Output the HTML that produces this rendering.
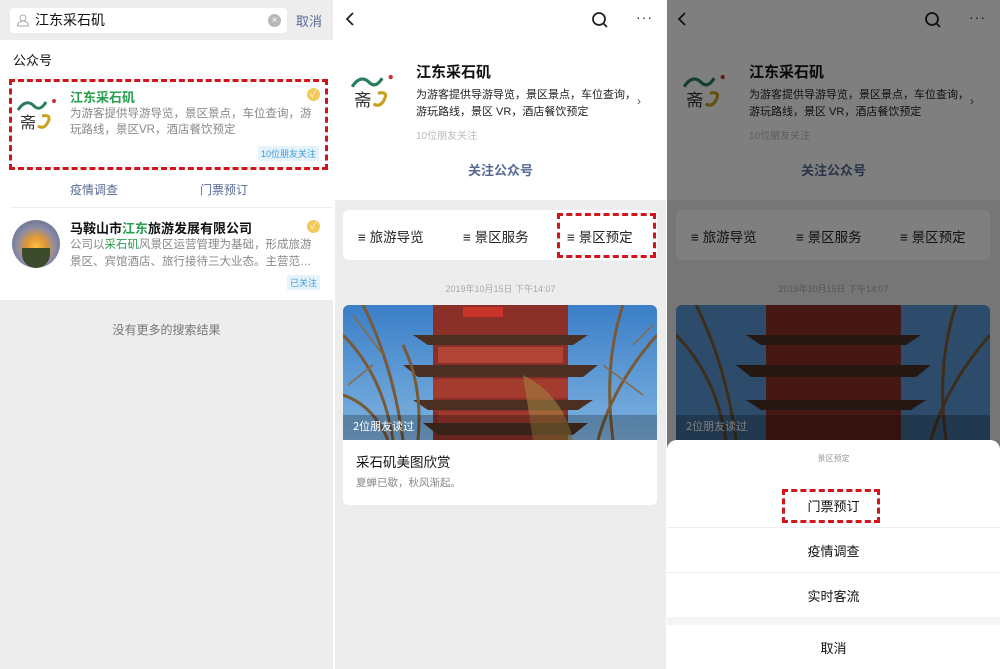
<!DOCTYPE html>
<html><head><meta charset="utf-8">
<style>
*{margin:0;padding:0;box-sizing:border-box}
body{width:1000px;height:669px;overflow:hidden;background:#fff;font-family:"Liberation Sans","Noto Sans CJK SC",sans-serif;position:relative}
.a{position:absolute;white-space:nowrap}
.p{position:absolute;top:0;height:669px;overflow:hidden}
.dash{position:absolute;border:3px dashed #d0161b}
</style></head><body>

<!-- Panel 1 -->
<div class="p" style="left:0;width:333px;background:#ededed">
  <div class="a" style="left:10px;top:8px;width:277px;height:25px;background:#fff;border-radius:4px"></div>
  <svg class="a" style="left:16px;top:13px" width="14" height="14" viewBox="0 0 14 14"><circle cx="7" cy="5" r="3" fill="none" stroke="#aaa"/><path d="M1.5 13c0-3 2.5-5 5.5-5s5.5 2 5.5 5z" fill="none" stroke="#aaa"/></svg>
  <div class="a" style="left:35px;top:10px;font-size:14px;color:#111">江东采石矶</div>
  <div class="a" style="left:268px;top:14px;width:13px;height:13px;border-radius:50%;background:#b8b8b8;color:#fff;font-size:10px;line-height:13px;text-align:center">×</div>
  <div class="a" style="left:296px;top:11px;font-size:13px;color:#576b95">取消</div>
  <div class="a" style="left:0;top:40px;width:333px;height:260px;background:#fff"></div>
  <div class="a" style="left:13px;top:50px;font-size:13px;color:#111">公众号</div>
  <svg class="a" style="left:16px;top:96px" width="42" height="36" viewBox="0 0 42 36"><path d="M2 14 Q10 2 18 10 Q24 16 30 6" fill="none" stroke="#2a7d5a" stroke-width="3"/><circle cx="38" cy="5" r="2" fill="#c33"/><text x="4" y="32" font-size="16" fill="#333" font-family="Noto Sans CJK SC">斋</text><path d="M26 20 Q36 18 32 26 Q28 34 22 30" fill="none" stroke="#c9a020" stroke-width="3"/></svg>
  <div class="a" style="left:70px;top:87px;font-size:13px;color:#2aa04e;font-weight:bold">江东采石矶</div>
  <div class="a" style="left:307px;top:88px;width:13px;height:13px;border-radius:50%;background:#f3c95a;color:#fff;font-size:9px;line-height:13px;text-align:center">✓</div>
  <div class="a" style="left:70px;top:106px;font-size:11.5px;line-height:16px;color:#888;white-space:normal;width:252px">为游客提供导游导览，景区景点，车位查询，游玩路线，景区VR，酒店餐饮预定</div>
  <div class="a" style="left:258px;top:146px;font-size:9px;color:#3a9bd8;background:#e6f3fb;padding:1px 3px">10位朋友关注</div>
  <div class="dash" style="left:9px;top:79px;width:319px;height:91px"></div>
  <div class="a" style="left:70px;top:181px;font-size:12px;color:#576b95">疫情调查</div>
  <div class="a" style="left:200px;top:181px;font-size:12px;color:#576b95">门票预订</div>
  <div class="a" style="left:10px;top:207px;width:323px;height:1px;background:#eee"></div>
  <div class="a" style="left:12px;top:220px;width:48px;height:48px;border-radius:50%;background:radial-gradient(circle at 50% 55%,#f7c04a 0,#e59a30 25%,#8a8aa8 55%,#4a6070 100%)"></div>
  <div class="a" style="left:22px;top:248px;width:28px;height:20px;border-radius:0 0 14px 14px;background:#3a4a2a"></div>
  <div class="a" style="left:70px;top:218px;font-size:13px;color:#111;font-weight:bold">马鞍山市<span style="color:#2aa04e">江东</span>旅游发展有限公司</div>
  <div class="a" style="left:307px;top:220px;width:13px;height:13px;border-radius:50%;background:#f3c95a;color:#fff;font-size:9px;line-height:13px;text-align:center">✓</div>
  <div class="a" style="left:70px;top:237px;font-size:11.5px;line-height:17px;color:#888;white-space:normal;width:252px">公司以<span style="color:#2aa04e">采石矶</span>风景区运营管理为基础，形成旅游景区、宾馆酒店、旅行接待三大业态。主营范…</div>
  <div class="a" style="left:287px;top:275px;font-size:9px;color:#3a9bd8;background:#e6f3fb;padding:1px 3px">已关注</div>
  <div class="a" style="left:0;top:321px;width:333px;text-align:center;font-size:12px;color:#777">没有更多的搜索结果</div>
</div>

<!-- Panel 2 -->
<div class="p" style="left:335px;width:331px;background:#ededed">
  <div class="a" style="left:0;top:0;width:331px;height:200px;background:#fff"></div>
  <svg class="a" style="left:9px;top:11px" width="12" height="16" viewBox="0 0 12 16"><path d="M9 2 L3 8 L9 14" fill="none" stroke="#222" stroke-width="1.8"/></svg>
  <svg class="a" style="left:256px;top:11px" width="18" height="18" viewBox="0 0 18 18"><circle cx="8" cy="8" r="6" fill="none" stroke="#222" stroke-width="1.8"/><path d="M12.5 12.5L16 16" stroke="#222" stroke-width="1.8"/></svg>
  <div class="a" style="left:301px;top:9px;font-size:14px;color:#222;letter-spacing:1px">···</div>
  <svg class="a" style="left:15px;top:70px" width="45" height="42" viewBox="0 0 42 36"><path d="M2 14 Q10 2 18 10 Q24 16 30 6" fill="none" stroke="#2a7d5a" stroke-width="3"/><circle cx="38" cy="5" r="2" fill="#c33"/><text x="4" y="32" font-size="16" fill="#333" font-family="Noto Sans CJK SC">斋</text><path d="M26 20 Q36 18 32 26 Q28 34 22 30" fill="none" stroke="#c9a020" stroke-width="3"/></svg>
  <div class="a" style="left:81px;top:61px;font-size:15px;font-weight:bold;color:#111">江东采石矶</div>
  <div class="a" style="left:81px;top:87px;font-size:11px;line-height:17px;color:#222;white-space:normal;width:222px">为游客提供导游导览，景区景点，车位查询，游玩路线，景区 VR，酒店餐饮预定</div>
  <div class="a" style="left:302px;top:94px;font-size:12px;color:#555">›</div>
  <div class="a" style="left:81px;top:127px;font-size:10px;color:#bbb">10位朋友关注</div>
  <div class="a" style="left:0;top:160px;width:331px;text-align:center;font-size:13px;color:#576b95;font-weight:bold">关注公众号</div>
  <div class="a" style="left:8px;top:210px;width:314px;height:50px;background:#fff;border-radius:6px"></div>
  <div class="a" style="left:23px;top:226px;font-size:13.5px;color:#222">≡ 旅游导览</div>
  <div class="a" style="left:128px;top:226px;font-size:13.5px;color:#222">≡ 景区服务</div>
  <div class="a" style="left:232px;top:226px;font-size:13.5px;color:#222">≡ 景区预定</div>
  <div class="a" style="left:0;top:282px;width:331px;text-align:center;font-size:9px;color:#aaa">2019年10月15日 下午14:07</div>
  <div class="a" style="left:8px;top:305px;width:314px;height:200px;background:#fff;border-radius:6px;overflow:hidden">
    <svg width="314" height="135" viewBox="0 0 314 135">
      <defs><linearGradient id="sk" x1="0" y1="0" x2="0" y2="1"><stop offset="0" stop-color="#3b7fc8"/><stop offset="1" stop-color="#7fb3e0"/></linearGradient></defs>
      <rect width="314" height="135" fill="url(#sk)"/>
      <rect x="90" y="0" width="135" height="135" fill="#8a3028"/>
      <path d="M70 30 L245 30 L230 40 L85 40Z M60 60 L255 60 L240 72 L75 72Z M70 95 L250 95 L235 105 L85 105Z M80 118 L245 118 L230 130 L95 130Z" fill="#4a2f22"/>
      <rect x="95" y="42" width="125" height="16" fill="#b04535"/><rect x="90" y="74" width="135" height="19" fill="#a33b2e"/><rect x="95" y="106" width="125" height="12" fill="#9e3a2e"/>
      <rect x="120" y="2" width="40" height="10" fill="#c8342a"/>
      <path d="M0 30 Q40 70 50 135 M20 0 Q50 60 60 135 M314 30 Q270 80 255 135 M280 0 Q260 60 270 135 M0 90 Q30 100 45 135 M60 40 Q80 80 75 135" stroke="#7a5a36" stroke-width="3" fill="none"/>
      <path d="M10 10 L40 50 M30 60 L5 80 M290 40 L310 20 M260 60 L300 90" stroke="#8a6a40" stroke-width="1.5" fill="none"/>
      <path d="M180 70 Q220 90 230 135 L190 135Z" fill="#a08040" opacity=".6"/>
      <rect x="0" y="110" width="314" height="25" fill="#000" opacity=".25"/>
      <text x="10" y="125" font-size="11" fill="#fff" font-family="Noto Sans CJK SC">2位朋友读过</text>
    </svg>
    <div class="a" style="left:13px;top:146px;font-size:13.5px;color:#111">采石矶美图欣赏</div>
    <div class="a" style="left:13px;top:170px;font-size:10.5px;color:#888">夏蝉已歇，秋风渐起。</div>
  </div>
  <div class="dash" style="left:222px;top:213px;width:99px;height:45px"></div>
</div>

<!-- Panel 3 -->
<div class="p" style="left:667px;width:333px;background:#ededed">
  <div class="a" style="left:0;top:0;width:333px;height:200px;background:#fff"></div>
  <svg class="a" style="left:9px;top:11px" width="12" height="16" viewBox="0 0 12 16"><path d="M9 2 L3 8 L9 14" fill="none" stroke="#222" stroke-width="1.8"/></svg>
  <svg class="a" style="left:257px;top:11px" width="18" height="18" viewBox="0 0 18 18"><circle cx="8" cy="8" r="6" fill="none" stroke="#222" stroke-width="1.8"/><path d="M12.5 12.5L16 16" stroke="#222" stroke-width="1.8"/></svg>
  <div class="a" style="left:302px;top:9px;font-size:14px;color:#222;letter-spacing:1px">···</div>
  <svg class="a" style="left:15px;top:70px" width="45" height="42" viewBox="0 0 42 36"><path d="M2 14 Q10 2 18 10 Q24 16 30 6" fill="none" stroke="#2a7d5a" stroke-width="3"/><circle cx="38" cy="5" r="2" fill="#c33"/><text x="4" y="32" font-size="16" fill="#333" font-family="Noto Sans CJK SC">斋</text><path d="M26 20 Q36 18 32 26 Q28 34 22 30" fill="none" stroke="#c9a020" stroke-width="3"/></svg>
  <div class="a" style="left:82px;top:61px;font-size:15px;font-weight:bold;color:#111">江东采石矶</div>
  <div class="a" style="left:82px;top:87px;font-size:11px;line-height:17px;color:#222;white-space:normal;width:222px">为游客提供导游导览，景区景点，车位查询，游玩路线，景区 VR，酒店餐饮预定</div>
  <div class="a" style="left:303px;top:94px;font-size:12px;color:#555">›</div>
  <div class="a" style="left:82px;top:127px;font-size:10px;color:#bbb">10位朋友关注</div>
  <div class="a" style="left:0;top:160px;width:333px;text-align:center;font-size:13px;color:#576b95;font-weight:bold">关注公众号</div>
  <div class="a" style="left:9px;top:210px;width:314px;height:50px;background:#fff;border-radius:6px"></div>
  <div class="a" style="left:24px;top:226px;font-size:13.5px;color:#222">≡ 旅游导览</div>
  <div class="a" style="left:129px;top:226px;font-size:13.5px;color:#222">≡ 景区服务</div>
  <div class="a" style="left:233px;top:226px;font-size:13.5px;color:#222">≡ 景区预定</div>
  <div class="a" style="left:0;top:282px;width:333px;text-align:center;font-size:9px;color:#aaa">2019年10月15日 下午14:07</div>
  <div class="a" style="left:9px;top:305px;width:314px;height:200px;background:#fff;border-radius:6px;overflow:hidden">
    <svg width="314" height="135" viewBox="0 0 314 135">
      <rect width="314" height="135" fill="#5a96d4"/>
      <rect x="90" y="0" width="135" height="135" fill="#8a3028"/>
      <path d="M70 30 L245 30 L230 40 L85 40Z M60 60 L255 60 L240 72 L75 72Z M70 95 L250 95 L235 105 L85 105Z" fill="#4a2f22"/>
      <path d="M0 30 Q40 70 50 135 M20 0 Q50 60 60 135 M314 30 Q270 80 255 135 M280 0 Q260 60 270 135" stroke="#7a5a36" stroke-width="3" fill="none"/>
      <rect x="0" y="110" width="314" height="25" fill="#000" opacity=".25"/>
      <text x="10" y="125" font-size="11" fill="#fff" font-family="Noto Sans CJK SC">2位朋友读过</text>
    </svg>
  </div>
  <div class="a" style="left:0;top:0;width:333px;height:669px;background:rgba(0,0,0,.5)"></div>
  <div class="a" style="left:0;top:440px;width:333px;height:229px;background:#f4f4f4;border-radius:10px 10px 0 0;overflow:hidden">
    <div class="a" style="left:0;top:0;width:333px;height:177px;background:#fff"></div>
    <div class="a" style="left:0;top:13px;width:333px;text-align:center;font-size:8px;color:#999">景区预定</div>
    <div class="a" style="left:0;top:56px;width:333px;text-align:center;font-size:13px;color:#111">门票预订</div>
    <div class="a" style="left:0;top:87px;width:333px;height:1px;background:#eee"></div>
    <div class="a" style="left:0;top:101px;width:333px;text-align:center;font-size:13px;color:#111">疫情调查</div>
    <div class="a" style="left:0;top:132px;width:333px;height:1px;background:#eee"></div>
    <div class="a" style="left:0;top:146px;width:333px;text-align:center;font-size:13px;color:#111">实时客流</div>
    <div class="a" style="left:0;top:185px;width:333px;height:44px;background:#fff"></div>
    <div class="a" style="left:0;top:198px;width:333px;text-align:center;font-size:13px;color:#111">取消</div>
  </div>
  <div class="dash" style="left:115px;top:489px;width:98px;height:34px"></div>
</div>
</body></html>
